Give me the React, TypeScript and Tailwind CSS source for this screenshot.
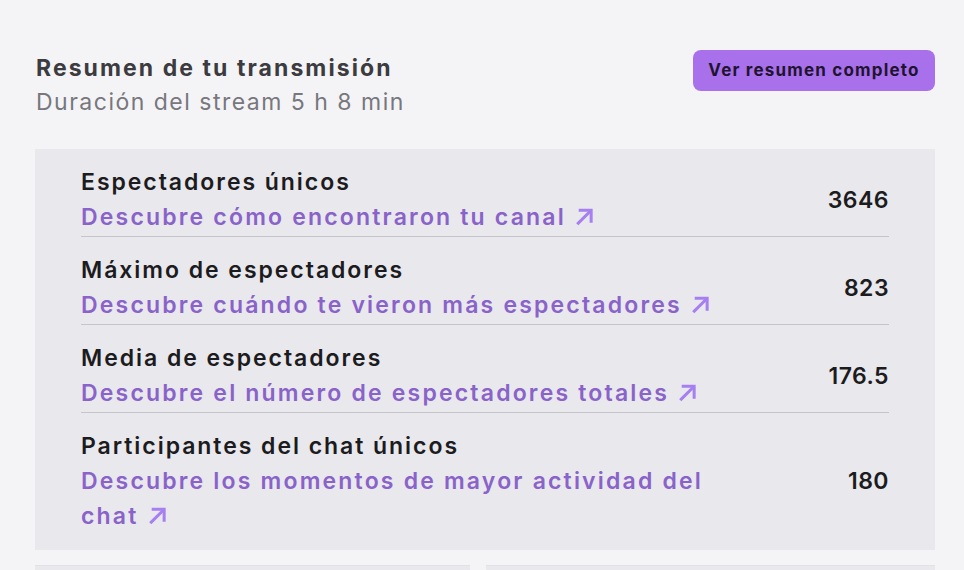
const rows = [
  { label: "Espectadores únicos", link: "Descubre cómo encontraron tu canal", value: "3646" },
  { label: "Máximo de espectadores", link: "Descubre cuándo te vieron más espectadores", value: "823" },
  { label: "Media de espectadores", link: "Descubre el número de espectadores totales", value: "176.5" },
  {
    label: "Participantes del chat únicos",
    link: "Descubre los momentos de mayor actividad del chat",
    value: "180",
  },
];

function Arrow() {
  return (
    <svg
      viewBox="0 0 20 20"
      className="inline-block w-[19px] h-[19px] ml-[9px] -mt-[5px] align-middle"
      fill="none"
      stroke="#a67ff0"
      strokeWidth="3.2"
      strokeLinecap="square"
    >
      <path d="M3.5 17 L16 4.5" />
      <path d="M5.5 3.5 H17 V15" />
    </svg>
  );
}

function StatRow({ label, link, value, last }: { label: string; link: string; value: string; last: boolean }) {
  return (
    <div className={`flex items-center justify-between pt-4 ${last ? "" : "pb-px border-b border-[#c6c5cb]"}`}>
      <div className="max-w-[650px]">
        <div className="text-[23px] leading-[35px] font-semibold tracking-[0.085em] text-[#1c1c20]">{label}</div>
        <div className="text-[23px] leading-[35px] font-semibold tracking-[0.095em] text-[#8963c9]">
          {link}
          <Arrow />
        </div>
      </div>
      <div className="text-[23px] font-semibold tracking-[0.02em] text-[#1c1c20]">{value}</div>
    </div>
  );
}

export default function App() {
  return (
    <div
      className="h-[570px] bg-[#f4f4f6] pl-[35px] pr-[29px] pt-[51px] overflow-hidden"
      style={{ fontFamily: "Inter, 'Noto Sans', sans-serif" }}
    >
      <div className="flex items-start justify-between">
        <div className="pl-px">
          <h1 className="text-[23px] leading-[34px] font-bold tracking-[0.09em] text-[#3b3b40]">
            Resumen de tu transmisión
          </h1>
          <p className="text-[23px] leading-[34px] tracking-[0.065em] text-[#77777d]">Duración del stream 5 h 8 min</p>
        </div>
        <button className="-mt-px h-[41px] w-[242px] rounded-[8px] bg-[#a970ec] text-[17px] font-bold tracking-[0.07em] text-[#1f1430]">
          Ver resumen completo
        </button>
      </div>

      <div className="mt-[30px] bg-[#e9e8ed] px-[46px] pb-4">
        {rows.map((r, i) => (
          <StatRow key={r.label} {...r} last={i === rows.length - 1} />
        ))}
      </div>

      <div className="mt-[15px] grid grid-cols-[435px_1fr] gap-[16px]">
        <div className="h-[40px] bg-[#e9e8ed] border-t border-[#e2e1e6]" />
        <div className="h-[40px] bg-[#e9e8ed] border-t border-[#e2e1e6]" />
      </div>
    </div>
  );
}
